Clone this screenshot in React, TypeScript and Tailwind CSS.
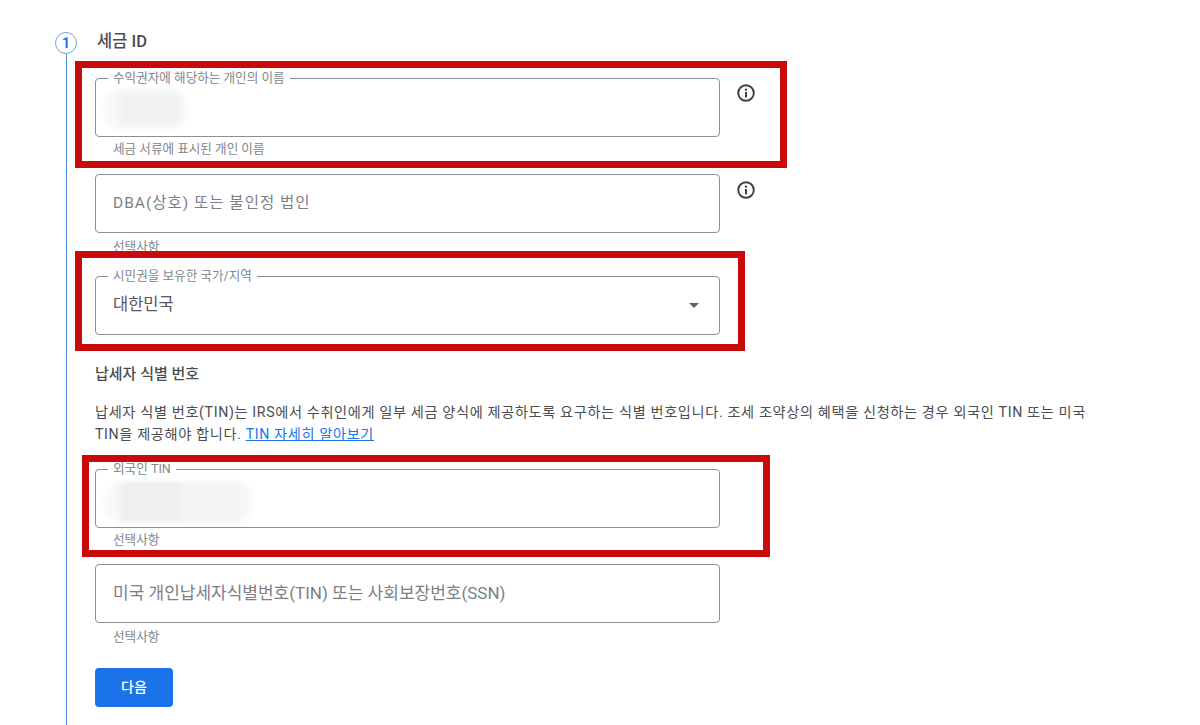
import { ReactNode } from 'react'

const FONT = "font-['Roboto','Noto_Sans_CJK_KR',sans-serif]"

function InfoIcon() {
  return (
    <svg width="20" height="20" viewBox="0 0 20 20" fill="none" className="shrink-0">
      <circle cx="10" cy="10" r="7.8" stroke="#3c4043" strokeWidth="1.9" />
      <circle cx="10" cy="6.6" r="1.2" fill="#3c4043" />
      <rect x="9" y="9" width="2" height="5.4" fill="#3c4043" />
    </svg>
  )
}

function Field({
  label,
  placeholder,
  placeholderClass,
  value,
  helper,
  info,
  arrow,
  children,
  className,
}: {
  label?: string
  placeholder?: string
  placeholderClass?: string
  value?: string
  helper?: string
  info?: boolean
  arrow?: boolean
  children?: ReactNode
  className?: string
}) {
  return (
    <div className={className}>
      <div className="flex items-start">
        {/* the legend cuts the outline, so a labelled box starts 7px higher */}
        <fieldset
          className={`w-[625px] rounded-[4px] border border-[#8d9093] ${label ? '-mt-[7px] h-[66px]' : 'h-[59px]'}`}
        >
          {label && (
            <legend className="ml-[12px] px-[5px] text-[12.6px] leading-[14px] text-[#80868b]">{label}</legend>
          )}
          <div className={`flex items-center justify-between px-[17px] ${label ? 'h-[45px]' : 'h-[57px]'}`}>
            {placeholder && <span className={`text-[#7b7f84] ${placeholderClass}`}>{placeholder}</span>}
            {value && <span className="text-[16.5px] text-[#55585c]">{value}</span>}
            {arrow && (
              <span className="mr-[3px] h-0 w-0 border-x-[5px] border-t-[5px] border-x-transparent border-t-[#5f6368]" />
            )}
            {children}
          </div>
        </fieldset>
        {info && (
          <div className={`ml-[16px] ${label ? 'mt-[5px]' : 'mt-[6px]'}`}>
            <InfoIcon />
          </div>
        )}
      </div>
      {helper && (
        <p className={`pl-[18px] text-[12.6px] leading-[16px] text-[#80868b] ${label ? 'mt-[4px]' : 'mt-[6px]'}`}>
          {helper}
        </p>
      )}
    </div>
  )
}

export default function App() {
  return (
    <div className={`${FONT} h-[725px] w-[1200px] overflow-hidden bg-white`}>
      <div className="flex h-full pl-[55px] pt-[31px]">
        <div className="flex w-[40px] shrink-0 flex-col pt-[1px]">
          <div className="flex h-[22px] w-[22px] items-center justify-center rounded-full border-[1.5px] border-[#6ea3ea] text-[14px] font-bold leading-none text-[#1a73e8]">
            1
          </div>
          <div className="ml-[10.5px] w-[1.5px] flex-1 bg-[#4a8fe8]" />
        </div>

        <div className="w-[1000px]">
          <h2 className="pl-[2px] pt-[1px] text-[16.5px] font-medium leading-[20px] text-[#4a4d51]">세금 ID</h2>

          {/* red annotation boxes wrap the fields they mark */}
          <div className="relative -ml-[20px] mt-[9px] h-[107px] w-[712px] border-[7px] border-[#c80a0a] pl-[13px] pt-[10px]">
            <Field label="수익권자에 해당하는 개인의 이름" helper="세금 서류에 표시된 개인 이름" info>
              <div className="ml-[-9px] mt-[2px] flex h-[42px] w-[84px] items-center rounded-[18px] bg-[#f8f8f8] blur-[2px]">
                <div className="ml-[16px] h-[30px] w-[60px] bg-[#f0f1f1]" />
              </div>
            </Field>
          </div>

          <Field
            className="mt-[6px]"
            placeholder="DBA(상호) 또는 불인정 법인"
            placeholderClass="text-[15.5px] tracking-[1px]"
            helper="선택사항"
            info
          />

          <div className="relative -ml-[20px] -mt-[4px] h-[100px] w-[670px] border-[7px] border-[#c80a0a] pl-[13px] pt-[18px]">
            <Field label="시민권을 보유한 국가/지역" value="대한민국" arrow />
          </div>

          <h3 className="mt-[13px] text-[15px] font-medium leading-[20px] text-[#4a4d51]">납세자 식별 번호</h3>
          <p className="mt-[17px] w-[1000px] text-[14.2px] leading-[22px] tracking-[0.63px] text-[#4a4d51]">
            납세자 식별 번호(TIN)는 IRS에서 수취인에게 일부 세금 양식에 제공하도록 요구하는 식별 번호입니다. 조세
            조약상의 혜택을 신청하는 경우 외국인 TIN 또는 미국
            <br />
            TIN을 제공해야 합니다. <span className="text-[#1a73e8] underline">TIN 자세히 알아보기</span>
          </p>

          <div className="relative -ml-[13px] mt-[10px] h-[102px] w-[688px] border-[7px] border-[#c80a0a] pl-[6px] pt-[7px]">
            <Field label="외국인 TIN" helper="선택사항">
              <div className="ml-[-9px] mt-[6px] flex h-[42px] w-[150px] items-center rounded-[20px] bg-[#f8f8f8] blur-[2px]">
                <div className="ml-[16px] h-[40px] w-[60px] bg-[#eeefef]" />
                <div className="h-[40px] w-[60px] bg-[#f2f3f3]" />
              </div>
            </Field>
          </div>

          <Field
            className="mt-[7px]"
            placeholder="미국 개인납세자식별번호(TIN) 또는 사회보장번호(SSN)"
            placeholderClass="text-[17px]"
            helper="선택사항"
          />

          <button className="mt-[23px] h-[39px] w-[78px] rounded-[4px] bg-[#1a73e8] text-[14px] font-medium text-white">
            다음
          </button>
        </div>
      </div>
    </div>
  )
}
